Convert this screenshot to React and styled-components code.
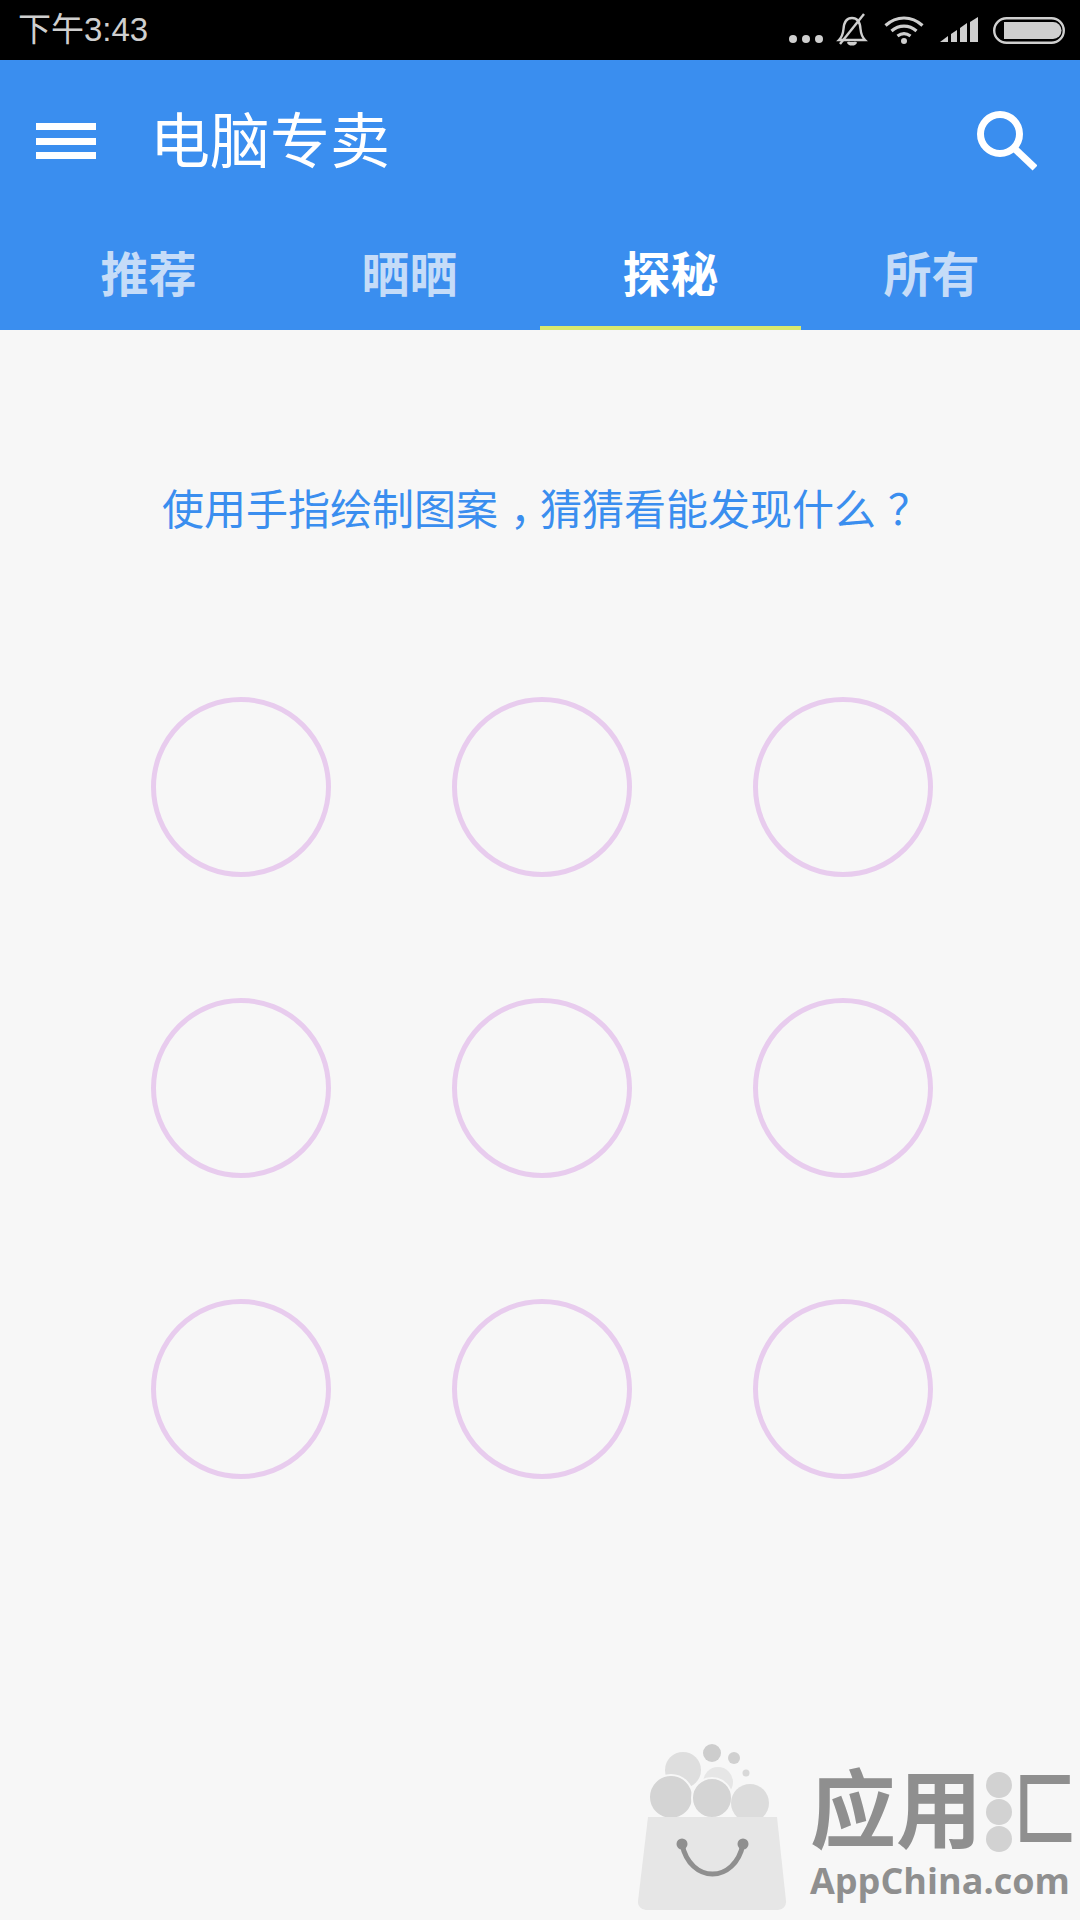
import React from "react";
import styled, { createGlobalStyle } from "styled-components";

const GlobalStyle = createGlobalStyle`
  html, body {
    margin: 0;
    padding: 0;
    background: #f7f7f7;
  }
`;

const cjk = `"Liberation Sans", "Noto Sans CJK SC", sans-serif`;

const Page = styled.div`
  position: relative;
  width: 1080px;
  height: 1920px;
  overflow: hidden;
  background: #f7f7f7;
  font-family: ${cjk};
`;

const StatusBar = styled.div`
  box-sizing: border-box;
  height: 60px;
  display: flex;
  align-items: center;
  justify-content: space-between;
  padding: 0 15px 0 18px;
  background: #000;
  color: #cfcfcf;
`;

const Clock = styled.span`
  font-size: 33px;
  line-height: 60px;
`;

const StatusIcons = styled.div`
  display: flex;
  align-items: center;
`;

const Header = styled.header`
  background: #3a8eef;
`;

const Toolbar = styled.div`
  box-sizing: border-box;
  height: 162px;
  display: flex;
  align-items: center;
  padding: 0 43px 0 36px;
`;

const Burger = styled.div`
  width: 60px;
  height: 36px;
  display: flex;
  flex-direction: column;
  justify-content: space-between;
  margin-right: 54px;
`;

const BurgerBar = styled.span`
  display: block;
  height: 7px;
  background: #fff;
`;

const Title = styled.h1`
  flex: 1;
  margin: 0;
  padding-top: 3px;
  font-size: 60px;
  font-weight: 400;
  line-height: 70px;
  color: #fff;
`;

const Tabs = styled.nav`
  height: 108px;
  display: grid;
  grid-template-columns: repeat(4, 261px);
  padding: 0 18px;
`;

const Tab = styled.div`
  box-sizing: border-box;
  display: flex;
  align-items: center;
  justify-content: center;
  padding-bottom: 6px;
  font-size: 48px;
  font-weight: 700;
  color: ${(p) => (p.$active ? "#fff" : "#c5dcf8")};
  border-bottom: 4px solid ${(p) => (p.$active ? "#d9e96f" : "transparent")};
`;

const Main = styled.main`
  padding-top: 151px;
`;

const Hint = styled.p`
  margin: 0;
  font-size: 42px;
  line-height: 60px;
  text-align: center;
  color: #3a8eef;
`;

// the device font centres full-width punctuation inside its cell
const Punct = styled.span`
  margin-left: 12px;
  letter-spacing: -12px;
`;

const Pattern = styled.div`
  display: grid;
  grid-template-columns: repeat(3, 180px);
  grid-auto-rows: 180px;
  gap: 121px;
  justify-content: center;
  margin-top: 156px;
  padding-left: 4px;
`;

const Dot = styled.div`
  box-sizing: border-box;
  border: 5px solid #e8ccee;
  border-radius: 50%;
`;

const Watermark = styled.div`
  position: absolute;
  left: 638px;
  top: 1740px;
  width: 442px;
  display: flex;
  gap: 22px;
  white-space: nowrap;
`;

const WatermarkText = styled.div`
  display: flex;
  flex-direction: column;
  padding-top: 24px;
  color: #8f8f8f;
`;

const BrandRow = styled.div`
  display: flex;
  align-items: center;
  height: 96px;
`;

const BrandName = styled.span`
  font-size: 86px;
  font-weight: 700;
  line-height: 96px;
`;

const BrandBeads = styled.div`
  display: flex;
  flex-direction: column;
  gap: 1px;
  margin: 0 2px 0 4px;
`;

const Bead = styled.span`
  width: 26px;
  height: 26px;
  border-radius: 50%;
  background: #d2d2d2;
`;

const BrandEdge = styled.span`
  display: inline-block;
  font-size: 62px;
  font-weight: 700;
  line-height: 96px;
  transform: scaleY(1.3);
`;

const BrandSite = styled.span`
  font-family: "Open Sans", "Liberation Sans", sans-serif;
  font-size: 36px;
  font-weight: 700;
  line-height: 38px;
  margin-top: 2px;
`;

const Dots = () => (
  <svg width="36" height="10" viewBox="0 0 36 10" fill="#cfcfcf" style={{ marginRight: 12, marginTop: 18 }}>
    <circle cx="5" cy="5" r="4" />
    <circle cx="18" cy="5" r="4" />
    <circle cx="31" cy="5" r="4" />
  </svg>
);

const BellOff = () => (
  <svg width="32" height="34" viewBox="0 0 32 34" fill="none" stroke="#cfcfcf" strokeWidth="2.4" style={{ marginRight: 16 }}>
    <path d="M3 27c3-3 4-6 4.500-11C8 9 11 5 16 5s8 4 8.500 11c.5 5 1.500 8 4.500 11z" />
    <path d="M12 29c1 3 7 3 8 0" fill="#cfcfcf" />
    <path d="M28 1L4 31" />
  </svg>
);

const Wifi = () => (
  <svg width="40" height="28" viewBox="0 0 40 28" fill="none" stroke="#cfcfcf" strokeWidth="3.2" style={{ marginRight: 16 }}>
    <path d="M1.500 9.500c11-10 26-10 37 0" />
    <path d="M7.500 15c7.500-6.500 17.500-6.500 25 0" />
    <path d="M13.500 20c4-3 9-3 13 0" />
    <circle cx="20" cy="25" r="3" fill="#cfcfcf" stroke="none" />
  </svg>
);

const Signal = () => (
  <svg width="40" height="26" viewBox="0 0 40 26" fill="#cfcfcf" style={{ marginRight: 13 }}>
    <path d="M0 25L8 19V25z" />
    <path d="M11 17l6-4v12h-6z" />
    <path d="M20 11l7-5v19h-7z" />
    <path d="M30 5l8-5v25h-8z" />
  </svg>
);

const Battery = () => (
  <svg width="72" height="27" viewBox="0 0 72 27">
    <rect x="1.200" y="1.200" width="69.600" height="24.600" rx="12.300" fill="none" stroke="#cfcfcf" strokeWidth="2.400" />
    <path d="M11 5h49a8.500 8.500 0 0 1 0 17H11z" fill="#cfcfcf" />
  </svg>
);

const Search = () => (
  <svg width="60" height="60" viewBox="0 0 60 60" fill="none" stroke="#fff">
    <circle cx="23" cy="23" r="19.500" strokeWidth="7" />
    <path d="M37 37l21 20" strokeWidth="7" />
  </svg>
);

const Bag = () => (
  <svg width="150" height="172" viewBox="0 0 150 172" style={{ flexShrink: 0 }}>
    <circle cx="45" cy="30" r="18" fill="#dedede" />
    <circle cx="74" cy="13" r="9" fill="#cdcdcd" />
    <circle cx="96" cy="18" r="6" fill="#d0d0d0" />
    <circle cx="108" cy="33" r="3.500" fill="#d8d8d8" />
    <circle cx="80" cy="42" r="15" fill="#e6e6e6" />
    <circle cx="33" cy="57" r="22" fill="#d4d4d4" stroke="#f7f7f7" strokeWidth="2" />
    <circle cx="74" cy="58" r="20" fill="#d4d4d4" stroke="#f7f7f7" strokeWidth="2" />
    <circle cx="112" cy="63" r="19" fill="#dcdcdc" />
    <path d="M10 77h129l9 84a8 8 0 0 1-8 9H8a8 8 0 0 1-8-9z" fill="#e6e6e6" />
    <path d="M44 104c8 40 53 40 61 0" fill="none" stroke="#8f8f8f" strokeWidth="5" />
    <circle cx="44" cy="104" r="5.500" fill="#8f8f8f" />
    <circle cx="105" cy="104" r="5.500" fill="#8f8f8f" />
  </svg>
);

const App = () => {
  const tabs = ["推荐", "晒晒", "探秘", "所有"];
  return (
    <Page>
      <GlobalStyle />
      <StatusBar>
        <Clock>下午3:43</Clock>
        <StatusIcons>
          <Dots />
          <BellOff />
          <Wifi />
          <Signal />
          <Battery />
        </StatusIcons>
      </StatusBar>
      <Header>
        <Toolbar>
          <Burger>
            <BurgerBar />
            <BurgerBar />
            <BurgerBar />
          </Burger>
          <Title>电脑专卖</Title>
          <Search />
        </Toolbar>
        <Tabs>
          {tabs.map((tab, i) => (
            <Tab key={tab} $active={i === 2}>
              {tab}
            </Tab>
          ))}
        </Tabs>
      </Header>
      <Main>
        <Hint>
          使用手指绘制图案<Punct>，</Punct>猜猜看能发现什么<Punct>？</Punct>
        </Hint>
        <Pattern>
          {Array.from({ length: 9 }).map((_, i) => (
            <Dot key={i} />
          ))}
        </Pattern>
      </Main>
      <Watermark>
        <Bag />
        <WatermarkText>
          <BrandRow>
            <BrandName>应用</BrandName>
            <BrandBeads>
              <Bead />
              <Bead />
              <Bead />
            </BrandBeads>
            <BrandEdge>匚</BrandEdge>
          </BrandRow>
          <BrandSite>AppChina.com</BrandSite>
        </WatermarkText>
      </Watermark>
    </Page>
  );
};

export default App;
